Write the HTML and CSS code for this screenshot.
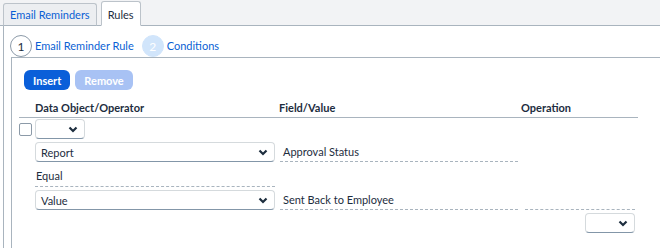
FILE: index.html
```html
<!DOCTYPE html>
<html>
<head>
    <title>Rules</title>
    <link rel="stylesheet" href="styles.css">
</head>
<body>
    <div class="tabbar">
        <div class="tab">Email Reminders</div>
        <div class="tab active">Rules</div>
    </div>

    <div class="panel">
        <!-- Wizard steps -->
        <div class="steps">
            <span class="step-num">1</span>
            <span class="step-label">Email Reminder Rule</span>
            <span class="step-num todo">2</span>
            <span class="step-label">Conditions</span>
        </div>

        <div class="box">
            <div class="toolbar">
                <button class="btn">Insert</button>
                <button class="btn disabled">Remove</button>
            </div>

            <div class="grid">
                <div class="head"></div>
                <div class="head">Data Object/Operator</div>
                <div class="head field-head">Field/Value</div>
                <div class="head">Operation</div>

                <div class="cell"><span class="checkbox"></span></div>
                <div class="cell"><div class="select small"><span></span><svg width="10" height="7" viewBox="0 0 10 7"><path d="M1.5 1.5 L5 5 L8.5 1.5" fill="none" stroke="#1d2d3e" stroke-width="2.2"/></svg></div></div>
                <div class="cell"></div>
                <div class="cell"></div>

                <div class="cell"></div>
                <div class="cell"><div class="select"><span>Report</span><svg width="10" height="7" viewBox="0 0 10 7"><path d="M1.5 1.5 L5 5 L8.5 1.5" fill="none" stroke="#1d2d3e" stroke-width="2.2"/></svg></div></div>
                <div class="cell"><div class="value">Approval Status</div></div>
                <div class="cell"></div>

                <div class="cell"></div>
                <div class="cell"><div class="value operator">Equal</div></div>
                <div class="cell"></div>
                <div class="cell"></div>

                <div class="cell"></div>
                <div class="cell"><div class="select"><span>Value</span><svg width="10" height="7" viewBox="0 0 10 7"><path d="M1.5 1.5 L5 5 L8.5 1.5" fill="none" stroke="#1d2d3e" stroke-width="2.2"/></svg></div></div>
                <div class="cell"><div class="value">Sent Back to Employee</div></div>
                <div class="cell"><div class="value op"></div></div>

                <div class="cell"></div>
                <div class="cell"></div>
                <div class="cell"></div>
                <div class="cell end"><div class="select small"><span></span><svg width="10" height="7" viewBox="0 0 10 7"><path d="M1.5 1.5 L5 5 L8.5 1.5" fill="none" stroke="#1d2d3e" stroke-width="2.2"/></svg></div></div>
            </div>
        </div>
    </div>
</body>
</html>
```

FILE: styles.css
```css
body {
    margin: 0;
    background: #ffffff;
    font-family: Lato, "Liberation Sans", sans-serif;
    font-size: 11px;
    color: #1d2d3e;
    height: 248px;
    overflow: hidden;
}

.tabbar {
    display: flex;
    align-items: flex-end;
    gap: 4px;
    height: 25px;
    padding-left: 3px;
    background: #f2f3f5;
    border-bottom: 1px solid #a9b4be;
}

.tab {
    height: 21px;
    line-height: 22px;
    padding: 0 6px;
    margin-bottom: -1px;
    border: 1px solid #bcc3ca;
    border-bottom: 1px solid #a9b4be;
    border-radius: 3px 3px 0 0;
    background: #eceef1;
    color: #0a5fd4;
}

.tab.active {
    height: 23px;
    line-height: 25px;
    background: #ffffff;
    border-bottom-color: #ffffff;
    color: #1d2d3e;
}

.panel {
    margin-left: 3px;
    padding-left: 6px;
    border-left: 1px solid #a9b4be;
    height: 222px;
}

.steps {
    display: flex;
    align-items: center;
    height: 23px;
    padding-top: 8px;
}

.step-num {
    width: 20px;
    height: 20px;
    line-height: 21px;
    border: 1px solid #8c9aa8;
    border-radius: 50%;
    text-align: center;
    background: #ffffff;
    color: #1d2d3e;
    font-size: 12px;
    margin-right: 3px;
}

.step-num.todo {
    border-color: #d1e5fb;
    background: #d1e5fb;
    color: #ffffff;
    margin-left: 8px;
}

.step-label {
    color: #0a5fd4;
}

.box {
    margin-left: 1px;
    border-top: 1px solid #a9b4be;
    border-left: 1px solid #a9b4be;
    height: 190px;
    padding: 12px 0 0 12px;
}

.toolbar {
    display: flex;
    gap: 5px;
}

.btn {
    height: 20px;
    padding: 0 9px;
    border: none;
    border-radius: 6px;
    background: #0a5fd9;
    color: #ffffff;
    font-family: inherit;
    font-size: 11px;
    font-weight: bold;
}

.btn.disabled {
    background: #a8c2f4;
}

.grid {
    display: grid;
    grid-template-columns: 16px 243px 243px 117px;
    margin: 10px 0 0 -5px;
}

.head {
    height: 17px;
    line-height: 16px;
    font-weight: bold;
    border-bottom: 1px solid #a9b4be;
    margin-bottom: 1px;
}

.field-head {
    padding-left: 1px;
}

.cell {
    display: flex;
    align-items: flex-start;
}

.cell.end {
    justify-content: flex-end;
    padding-right: 3px;
}

.checkbox {
    width: 11px;
    height: 11px;
    margin-top: 4px;
    border: 1px solid #8c9aa8;
    border-radius: 2px;
}

.select {
    display: flex;
    align-items: center;
    justify-content: space-between;
    box-sizing: border-box;
    width: 240px;
    height: 20px;
    margin-bottom: 3px;
    padding: 0 6px 0 5px;
    border: 1px solid #d5dadd;
    border-bottom: 1px solid #8396a8;
    border-radius: 4px;
    background: #ffffff;
}

.select.small {
    width: 50px;
}

.value {
    box-sizing: border-box;
    width: 238px;
    height: 20px;
    line-height: 20px;
    margin-left: 2px;
    padding-left: 3px;
    border-bottom: 1px dashed #a9b4be;
}

.value.operator {
    width: 240px;
    height: 22px;
    line-height: 21px;
    margin: 0 0 3px 0;
    padding-left: 1px;
}

.value.op {
    width: 110px;
    margin-left: 4px;
}
```
